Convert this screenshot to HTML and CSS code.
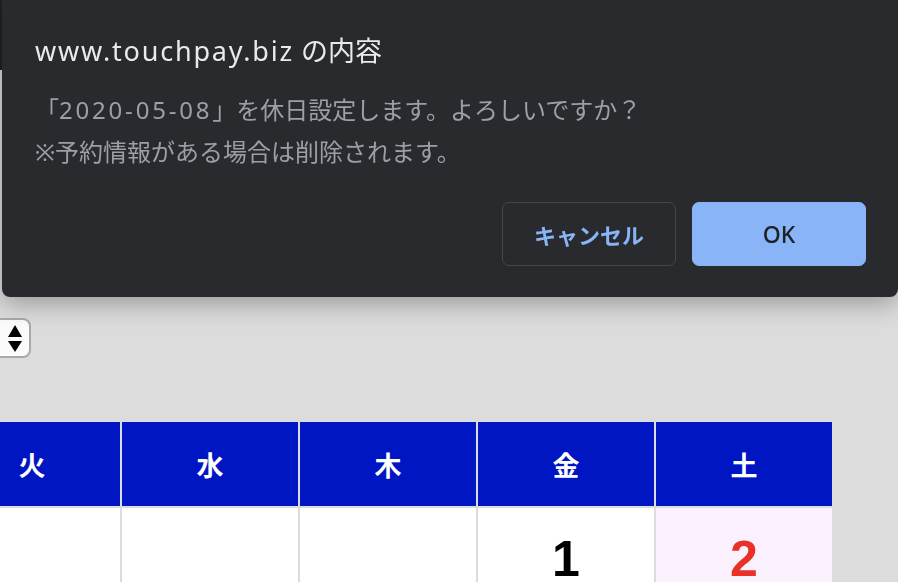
FILE: index.html
```html
<!DOCTYPE html>
<html lang="ja">
<head>
<meta charset="utf-8">
<title>カレンダー</title>
<link rel="stylesheet" href="styles.css">
</head>
<body>
<div class="page">
  <header class="site-header">
    <span class="menu-lines"><i></i><i></i><i></i><i></i></span>
  </header>
  <div class="toolbar">
    <div class="select-box">
      <span class="arrows"><span class="tri up"></span><span class="tri down"></span></span>
    </div>
  </div>
  <table class="calendar">
    <thead>
      <tr>
        <th>日</th><th>月</th><th>火</th><th>水</th><th>木</th><th>金</th><th>土</th>
      </tr>
    </thead>
    <tbody>
      <tr>
        <td></td><td></td><td></td><td></td><td></td>
        <td><span class="num">1</span></td>
        <td class="sat"><span class="num red">2</span></td>
      </tr>
    </tbody>
  </table>
</div>

<div class="dialog" role="dialog">
  <h1 class="dialog-title"><span class="latin">www.touchpay.biz</span> の内容</h1>
  <p class="dialog-message">「<span class="date">2020-05-08</span>」を休日設定します。よろしいですか？<br>※予約情報がある場合は削除されます。</p>
  <div class="dialog-actions">
    <button class="btn btn-cancel">キャンセル</button>
    <button class="btn btn-ok">OK</button>
  </div>
</div>
</body>
</html>
```
FILE: styles.css
```css
* { box-sizing: border-box; }

html, body {
  margin: 0;
  padding: 0;
  background: #dcdcdc;
  overflow: hidden;
  font-family: "Noto Sans", "Noto Sans CJK JP", sans-serif;
}

.page {
  margin-left: -414px;
  width: 1320px;
}

.site-header {
  height: 70px;
  background: #202124;
  display: flex;
  justify-content: flex-end;
  padding-top: 22px;
}

.menu-lines {
  display: flex;
  flex-direction: column;
  gap: 3px;
  width: 430px;
}
.menu-lines i {
  display: block;
  width: 2px;
  height: 2px;
  background: #bbb;
}

.toolbar {
  margin-top: 248px;
  height: 40px;
  padding-left: 354px;
}

.select-box {
  width: 91px;
  height: 40px;
  background: #fbfbfb;
  border: 2px solid #a9a9a9;
  border-radius: 8px;
  display: flex;
  justify-content: flex-end;
  align-items: center;
  padding-right: 7px;
}

.arrows {
  display: flex;
  flex-direction: column;
  gap: 4px;
}
.tri {
  width: 0;
  height: 0;
  border-left: 7.5px solid transparent;
  border-right: 7.5px solid transparent;
}
.tri.up { border-bottom: 12px solid #000; }
.tri.down { border-top: 11px solid #000; }

.calendar {
  margin-top: 62px;
  border-collapse: separate;
  border-spacing: 2px;
  table-layout: fixed;
  width: 1248px;
}

.calendar th {
  width: 176px;
  height: 84px;
  background: #0016c3;
  color: #fff;
  font-size: 27px;
  font-weight: 700;
  font-family: "Noto Sans CJK JP", sans-serif;
  text-align: center;
  vertical-align: middle;
  padding: 0;
}

.calendar td {
  height: 120px;
  background: #fff;
  text-align: center;
  vertical-align: top;
  padding: 26px 0 0;
}

.calendar td.sat { background: #fbf0fd; }

.num {
  display: inline-block;
  font-family: "Liberation Sans", Arial, sans-serif;
  font-weight: 700;
  font-size: 50px;
  line-height: 50px;
  color: #000;
}
.num.red { color: #e83228; }

.dialog {
  position: fixed;
  top: 0;
  left: 2px;
  right: 0;
  height: 297px;
  padding: 32px 32px 0 33px;
  background: #292a2d;
  border-radius: 0 0 8px 8px;
  box-shadow: 0 6px 26px rgba(0, 0, 0, 0.32);
}

.dialog-title {
  margin: 0;
  font-size: 27px;
  line-height: 38px;
  font-weight: 400;
  color: #e8eaed;
}
.dialog-title .latin { letter-spacing: 1.8px; }

.dialog-message {
  margin: 19px 0 0;
  font-size: 24px;
  line-height: 42px;
  color: #9aa0a6;
}
.dialog-message .date { letter-spacing: 2.8px; }

.dialog-actions {
  margin-top: 29px;
  display: flex;
  justify-content: flex-end;
  gap: 16px;
}

.btn {
  width: 174px;
  height: 64px;
  border-radius: 7px;
  font-family: "Noto Sans", "Noto Sans CJK JP", sans-serif;
  font-size: 22px;
  padding: 0;
  cursor: pointer;
}

.btn-cancel {
  background: #292a2d;
  border: 1px solid #44464a;
  color: #8ab4f8;
  font-weight: 700;
}

.btn-ok {
  background: #8ab4f8;
  border: 1px solid #8ab4f8;
  color: #202124;
  font-weight: 500;
  font-size: 23px;
}
```
